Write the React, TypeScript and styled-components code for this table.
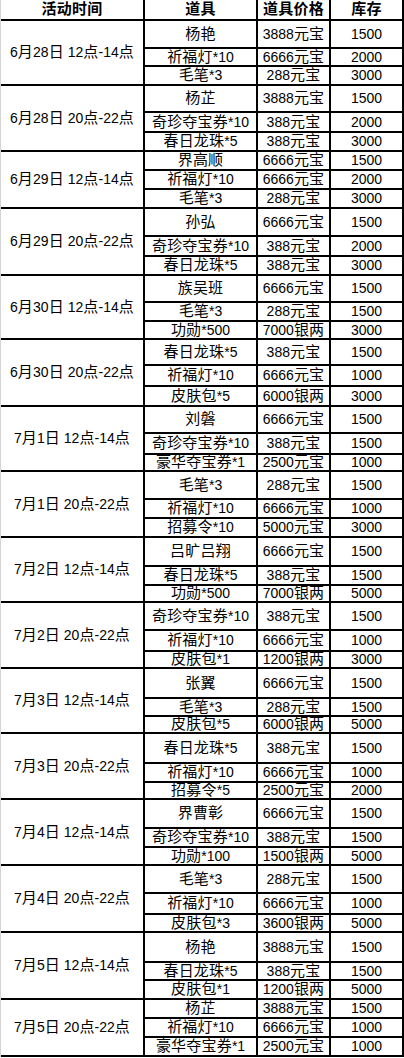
import React from "react";
import styled, { createGlobalStyle } from "styled-components";

const GlobalStyle = createGlobalStyle`
    html, body {
        margin: 0;
        padding: 0;
        background: #ffffff;
    }
    body {
        font-family: "Liberation Sans", "Noto Sans CJK SC", sans-serif;
        color: #000000;
    }
`;

// 表格外框 (左边浅灰色线)
const Sheet = styled.div`
    width: 403px;
    border-left: 1px solid #d4d4d4;
    background: #ffffff;
`;

const Table = styled.table`
    width: 402px;
    table-layout: fixed;
    border-collapse: collapse;
    font-size: 14px;
    line-height: 13px;
`;

const HeadCell = styled.th`
    height: 19px;
    padding: 0;
    border: 2px solid #000;
    border-top: none;
    font-weight: bold;
    text-align: center;
    vertical-align: middle;
    &:first-child {
        border-left: none;
    }
`;

const TimeCell = styled.td`
    padding: 0;
    border: 2px solid #000;
    border-left: none;
    text-align: center;
    vertical-align: middle;
    white-space: nowrap;
`;

const Cell = styled.td`
    padding: 0;
    border: 2px solid #000;
    text-align: center;
    vertical-align: middle;
    white-space: nowrap;
`;

const Row = styled.tr<{ $h: number }>`
    height: ${(p) => p.$h}px;
`;

// 中文字符比数字略大
const Han = styled.span<{ $bold?: boolean }>`
    font-family: "Noto Sans CJK SC", sans-serif;
    font-size: 15px;
    line-height: 1px;
    font-weight: ${(p) => (p.$bold ? 700 : 400)};
    letter-spacing: 0.2px;
`;

function Mixed({ text, bold }: { text: string; bold?: boolean }) {
    const parts = text.split(/([\u4e00-\u9fff]+)/);
    return (
        <>
            {parts.map((p, i) =>
                /[\u4e00-\u9fff]/.test(p) ? (
                    <Han key={i} $bold={bold}>
                        {p}
                    </Han>
                ) : (
                    <React.Fragment key={i}>{p}</React.Fragment>
                )
            )}
        </>
    );
}

interface IItem {
    name: string;
    price: string;
    stock: string;
}

interface IGroup {
    time: string;
    heights: number[];
    items: IItem[];
}

const it = (name: string, price: string, stock: string): IItem => ({ name, price, stock });

const groups: IGroup[] = [
    {
        time: "6月28日 12点-14点",
        heights: [28, 18, 19],
        items: [it("杨艳", "3888元宝", "1500"), it("祈福灯*10", "6666元宝", "2000"), it("毛笔*3", "288元宝", "3000")],
    },
    {
        time: "6月28日 20点-22点",
        heights: [27, 20, 19],
        items: [it("杨芷", "3888元宝", "1500"), it("奇珍夺宝券*10", "388元宝", "2000"), it("春日龙珠*5", "388元宝", "3000")],
    },
    {
        time: "6月29日 12点-14点",
        heights: [19, 19, 19],
        items: [it("界高顺", "6666元宝", "1500"), it("祈福灯*10", "6666元宝", "2000"), it("毛笔*3", "288元宝", "3000")],
    },
    {
        time: "6月29日 20点-22点",
        heights: [28, 20, 19],
        items: [it("孙弘", "6666元宝", "1500"), it("奇珍夺宝券*10", "388元宝", "2000"), it("春日龙珠*5", "388元宝", "3000")],
    },
    {
        time: "6月30日 12点-14点",
        heights: [27, 19, 18],
        items: [it("族吴班", "6666元宝", "1500"), it("毛笔*3", "288元宝", "1500"), it("功勋*500", "7000银两", "3000")],
    },
    {
        time: "6月30日 20点-22点",
        heights: [26, 21, 20],
        items: [it("春日龙珠*5", "388元宝", "1500"), it("祈福灯*10", "6666元宝", "1000"), it("皮肤包*5", "6000银两", "3000")],
    },
    {
        time: "7月1日 12点-14点",
        heights: [27, 21, 17],
        items: [it("刘磐", "6666元宝", "1500"), it("奇珍夺宝券*10", "388元宝", "1500"), it("豪华夺宝券*1", "2500元宝", "1000")],
    },
    {
        time: "7月1日 20点-22点",
        heights: [28, 19, 19],
        items: [it("毛笔*3", "288元宝", "1500"), it("祈福灯*10", "6666元宝", "1000"), it("招募令*10", "5000元宝", "3000")],
    },
    {
        time: "7月2日 12点-14点",
        heights: [29, 19, 17],
        items: [it("吕旷吕翔", "6666元宝", "1500"), it("春日龙珠*5", "388元宝", "1500"), it("功勋*500", "7000银两", "5000")],
    },
    {
        time: "7月2日 20点-22点",
        heights: [28, 21, 17],
        items: [it("奇珍夺宝券*10", "388元宝", "1500"), it("祈福灯*10", "6666元宝", "1000"), it("皮肤包*1", "1200银两", "3000")],
    },
    {
        time: "7月3日 12点-14点",
        heights: [30, 18, 17],
        items: [it("张翼", "6666元宝", "1500"), it("毛笔*3", "288元宝", "1500"), it("皮肤包*5", "6000银两", "5000")],
    },
    {
        time: "7月3日 20点-22点",
        heights: [30, 19, 17],
        items: [it("春日龙珠*5", "388元宝", "1500"), it("祈福灯*10", "6666元宝", "1000"), it("招募令*5", "2500元宝", "2000")],
    },
    {
        time: "7月4日 12点-14点",
        heights: [29, 19, 18],
        items: [it("界曹彰", "6666元宝", "1500"), it("奇珍夺宝券*10", "388元宝", "1500"), it("功勋*100", "1500银两", "5000")],
    },
    {
        time: "7月4日 20点-22点",
        heights: [28, 21, 18],
        items: [it("毛笔*3", "288元宝", "1500"), it("祈福灯*10", "6666元宝", "1000"), it("皮肤包*3", "3600银两", "5000")],
    },
    {
        time: "7月5日 12点-14点",
        heights: [30, 18, 19],
        items: [it("杨艳", "3888元宝", "1500"), it("春日龙珠*5", "388元宝", "1500"), it("皮肤包*1", "1200银两", "5000")],
    },
    {
        time: "7月5日 20点-22点",
        heights: [19, 19, 19],
        items: [it("杨芷", "3888元宝", "1500"), it("祈福灯*10", "6666元宝", "1000"), it("豪华夺宝券*1", "2500元宝", "1000")],
    },
];

function App() {
    return (
        <>
            <GlobalStyle />
            <Sheet>
                <Table>
                    <colgroup>
                        <col style={{ width: 143 }} />
                        <col style={{ width: 113 }} />
                        <col style={{ width: 73 }} />
                        <col style={{ width: 73 }} />
                    </colgroup>
                    <thead>
                        <tr>
                            <HeadCell><Mixed text="活动时间" bold /></HeadCell>
                            <HeadCell><Mixed text="道具" bold /></HeadCell>
                            <HeadCell><Mixed text="道具价格" bold /></HeadCell>
                            <HeadCell><Mixed text="库存" bold /></HeadCell>
                        </tr>
                    </thead>
                    <tbody>
                        {groups.map((g) =>
                            g.items.map((item, i) => (
                                <Row key={g.time + i} $h={g.heights[i]}>
                                    {i === 0 && (
                                        <TimeCell rowSpan={g.items.length}>
                                            <Mixed text={g.time} />
                                        </TimeCell>
                                    )}
                                    <Cell><Mixed text={item.name} /></Cell>
                                    <Cell><Mixed text={item.price} /></Cell>
                                    <Cell>{item.stock}</Cell>
                                </Row>
                            ))
                        )}
                    </tbody>
                </Table>
            </Sheet>
        </>
    );
}

export default App;
